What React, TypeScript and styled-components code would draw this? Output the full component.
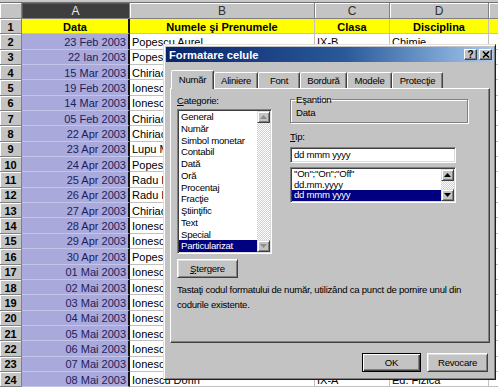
import React from "react";
import styled, { createGlobalStyle } from "styled-components";

const uiFont = `"Liberation Sans", Arial, sans-serif`;

const GlobalStyle = createGlobalStyle`
  html, body { margin: 0; padding: 0; background: #ffffff; }
  body { overflow: hidden; font-family: "Liberation Sans", Arial, sans-serif; }
  * { box-sizing: border-box; }
`;

const Screen = styled.div`
  position: relative;
  width: 498px;
  height: 389px;
  overflow: hidden;
  background: #fff;
`;

const ToolbarEdge = styled.div`
  height: 3px;
  background: #c8c8c8;
  border-bottom: 1px solid #707070;
`;

const Sheet = styled.div`
  display: grid;
  grid-template-columns: 22px 108px 185px 75px 99px 64px;
  grid-template-rows: 16px;
  grid-auto-rows: 15.35px;
  font-size: 11px;
  color: #000;
`;

const HeadCell = styled.div<{ $active?: boolean }>`
  display: flex;
  align-items: center;
  justify-content: center;
  background: ${(p) => (p.$active ? "#3e3e3e" : "#c4c4c4")};
  color: ${(p) => (p.$active ? "#e8e8e8" : "#303030")};
  border-right: 1px solid #808080;
  border-bottom: 1px solid #808080;
  box-shadow: inset 1px 1px 0 ${(p) => (p.$active ? "#5a5a5a" : "#ffffff")};
  font-size: 12px;
`;

const RowHead = styled(HeadCell)`
  font-weight: bold;
  font-size: 11px;
  color: #000;
  padding-top: 1px;
`;

type Fill = "title" | "selected" | "plain";

const Cell = styled.div<{ $fill: Fill; $align?: "left" | "center" | "right"; $edge?: boolean }>`
  display: flex;
  align-items: center;
  justify-content: ${(p) =>
    p.$align === "right" ? "flex-end" : p.$align === "center" ? "center" : "flex-start"};
  padding: 1px 2px 0 2px;
  overflow: hidden;
  white-space: nowrap;
  font-weight: ${(p) => (p.$fill === "title" ? "bold" : "normal")};
  background: ${(p) =>
    p.$fill === "title" ? "#ffff00" : p.$fill === "selected" ? "#a9a9db" : "#ffffff"};
  color: ${(p) => (p.$fill === "selected" ? "#1d1d5c" : "#000")};
  border-bottom: 1px solid ${(p) => (p.$fill === "selected" ? "#c4c4e8" : "#c0c0c0")};
  border-right: ${(p) => (p.$edge ? "2px solid #151515" : "1px solid #c0c0c0")};
`;

/* ---------- dialog ---------- */

const Dialog = styled.div`
  position: absolute;
  left: 163px;
  top: 44px;
  width: 333px;
  height: 336px;
  display: flex;
  flex-direction: column;
  padding: 2px;
  background: #c3c3c3;
  border: 1px solid;
  border-color: #e0e0e0 #202020 #202020 #e0e0e0;
  box-shadow: inset 1px 1px 0 #ffffff, inset -1px -1px 0 #808080;
  font-family: ${uiFont};
  font-size: 9.6px;
  letter-spacing: -0.25px;
  color: #000;
`;

const TitleBar = styled.div`
  height: 15px;
  display: flex;
  align-items: center;
  padding: 0 1px 0 3px;
  background: linear-gradient(to right, #0a246a 0%, #2a5a9a 55%, #a6caf0 100%);
`;

const Title = styled.span`
  font-weight: bold;
  font-size: 11.2px;
  letter-spacing: 0;
  color: #fff;
`;

const CaptionButtons = styled.div`
  margin-left: auto;
  display: flex;
  gap: 2px;
`;

const CaptionButton = styled.div`
  width: 13px;
  height: 11px;
  display: flex;
  align-items: center;
  justify-content: center;
  background: #c3c3c3;
  border: 1px solid;
  border-color: #ffffff #404040 #404040 #ffffff;
  box-shadow: inset -1px -1px 0 #808080;
  font-weight: bold;
  font-size: 10px;
  line-height: 9px;
`;

const Body = styled.div`
  flex: 1;
  display: flex;
  flex-direction: column;
  padding: 8px 3px 0 4px;
`;

const TabStrip = styled.div`
  height: 18px;
  display: flex;
  align-items: flex-end;
  padding-left: 1px;
`;

const Tab = styled.div<{ $width: number; $active?: boolean }>`
  position: relative;
  z-index: ${(p) => (p.$active ? 1 : 0)};
  width: ${(p) => p.$width}px;
  height: ${(p) => (p.$active ? 19 : 16)}px;
  margin-bottom: ${(p) => (p.$active ? -1 : 0)}px;
  display: flex;
  align-items: center;
  justify-content: center;
  padding-bottom: ${(p) => (p.$active ? 2 : 0)}px;
  background: #c3c3c3;
  border: 1px solid;
  border-bottom: none;
  border-color: #ffffff #404040 transparent #ffffff;
  border-radius: 2px 2px 0 0;
  box-shadow: inset -1px 0 0 #808080;
`;

const Panel = styled.div`
  height: 255px;
  display: flex;
  flex-direction: column;
  padding: 6px 6px 0 6px;
  border: 1px solid;
  border-color: #ffffff #404040 #404040 #ffffff;
  box-shadow: inset -1px -1px 0 #808080;
`;

const Columns = styled.div`
  display: flex;
  gap: 18px;
`;

const LeftCol = styled.div`
  width: 95px;
  display: flex;
  flex-direction: column;
`;

const RightCol = styled.div`
  width: 178px;
  display: flex;
  flex-direction: column;
`;

const FieldLabel = styled.div<{ $gap?: number }>`
  height: 12px;
  line-height: 12px;
  margin-top: ${(p) => p.$gap ?? 0}px;
`;

const Key = styled.span`
  text-decoration: underline;
`;

const SampleGroup = styled.fieldset`
  margin: -1px 0 0 0;
  height: 29px;
  padding: 2px 5px 0 5px;
  border: 1px solid #808080;
  box-shadow: 1px 1px 0 #ffffff, inset 1px 1px 0 #ffffff;
`;

const Legend = styled.legend`
  padding: 0 1px;
  margin-left: -1px;
  line-height: 11px;
`;

const SampleValue = styled.div`
  line-height: 12px;
`;

const Sunken = styled.div`
  background: #fff;
  border: 1px solid;
  border-color: #808080 #ffffff #ffffff #808080;
  box-shadow: inset 1px 1px 0 #404040, inset -1px -1px 0 #dcdcdc;
`;

const TextInput = styled(Sunken)`
  width: 166px;
  height: 16px;
  margin-top: 4px;
  padding: 0 3px;
  line-height: 14px;
`;

const ListBox = styled(Sunken)<{ $height: number; $width: number; $gap?: number }>`
  width: ${(p) => p.$width}px;
  height: ${(p) => p.$height}px;
  margin-top: ${(p) => p.$gap ?? 0}px;
  padding: 1px;
  display: flex;
  overflow: hidden;
`;

const Items = styled.div`
  flex: 1;
  display: flex;
  flex-direction: column;
  overflow: hidden;
`;

const Item = styled.div<{ $rowHeight: number; $selected?: boolean }>`
  height: ${(p) => p.$rowHeight}px;
  line-height: ${(p) => p.$rowHeight}px;
  flex-shrink: 0;
  padding: 0 2px;
  white-space: nowrap;
  background: ${(p) => (p.$selected ? "#000080" : "transparent")};
  color: ${(p) => (p.$selected ? "#ffffff" : "#000")};
`;

const ScrollBar = styled.div`
  width: 13px;
  display: flex;
  flex-direction: column;
`;

const ScrollButton = styled.div`
  height: 12px;
  display: flex;
  align-items: center;
  justify-content: center;
  background: #c3c3c3;
  border: 1px solid;
  border-color: #dfdfdf #404040 #404040 #dfdfdf;
  box-shadow: inset 1px 1px 0 #ffffff, inset -1px -1px 0 #808080;
`;

const ScrollTrack = styled.div`
  flex: 1;
  background-color: #ffffff;
  background-image: repeating-conic-gradient(#d0d0d0 0 25%, #ffffff 0 50%);
  background-size: 2px 2px;
`;

const PushButton = styled.div<{ $width: number; $default?: boolean; $gap?: number }>`
  width: ${(p) => p.$width}px;
  height: 19px;
  margin-top: ${(p) => p.$gap ?? 0}px;
  display: flex;
  align-items: center;
  justify-content: center;
  background: #c3c3c3;
  border: 1px solid;
  border-color: ${(p) => (p.$default ? "#000" : "#ffffff #404040 #404040 #ffffff")};
  box-shadow: ${(p) =>
    p.$default
      ? "inset 1px 1px 0 #ffffff, inset -1px -1px 0 #404040, inset -2px -2px 0 #808080"
      : "inset 1px 1px 0 #dfdfdf, inset -1px -1px 0 #808080"};
`;

const Hint = styled.p`
  margin: 4px 0 0 0;
  line-height: 15px;
  white-space: nowrap;
`;

const Footer = styled.div`
  margin-top: 10px;
  display: flex;
  justify-content: flex-end;
  gap: 6px;
  padding-right: 2px;
`;

/* ---------- small drawings ---------- */

const Arrow = ({ up, disabled }: { up?: boolean; disabled?: boolean }) => (
  <svg width="7" height="4" viewBox="0 0 7 4">
    <polygon
      points={up ? "0,4 3.5,0 7,4" : "0,0 3.5,4 7,0"}
      fill={disabled ? "#8c8c8c" : "#000"}
    />
  </svg>
);

const CloseGlyph = () => (
  <svg width="8" height="7" viewBox="0 0 8 7">
    <path d="M1 0.5 L7 6.5 M7 0.5 L1 6.5" stroke="#000" strokeWidth="1.6" />
  </svg>
);

/* ---------- data ---------- */

const rows: [string, string, string, string][] = [
  ["23 Feb 2003", "Popescu Aurel", "IX-B", "Chimie"],
  ["22 Ian 2003", "Popescu Aurel", "IX-B", "Fizică"],
  ["15 Mar 2003", "Chiriac Ana", "X-A", "Matematică"],
  ["19 Feb 2003", "Ionescu Dan", "IX-A", "Chimie"],
  ["14 Mar 2003", "Ionescu Dan", "IX-A", "Biologie"],
  ["05 Feb 2003", "Chiriac Ana", "X-A", "Istorie"],
  ["22 Apr 2003", "Chiriac Ana", "X-A", "Chimie"],
  ["23 Apr 2003", "Lupu Maria", "XI-C", "Fizică"],
  ["24 Apr 2003", "Popescu Aurel", "IX-B", "Geografie"],
  ["25 Apr 2003", "Radu Ioana", "XII-A", "Matematică"],
  ["26 Apr 2003", "Radu Ioana", "XII-A", "Chimie"],
  ["27 Apr 2003", "Chiriac Ana", "X-A", "Biologie"],
  ["28 Apr 2003", "Ionescu Dan", "IX-A", "Fizică"],
  ["29 Apr 2003", "Ionescu Dan", "IX-A", "Istorie"],
  ["30 Apr 2003", "Popescu Aurel", "IX-B", "Chimie"],
  ["01 Mai 2003", "Ionescu Dorin", "IX-A", "Matematică"],
  ["02 Mai 2003", "Ionescu Dorin", "IX-A", "Fizică"],
  ["03 Mai 2003", "Ionescu Dorin", "IX-A", "Chimie"],
  ["04 Mai 2003", "Ionescu Dorin", "IX-A", "Biologie"],
  ["05 Mai 2003", "Ionescu Dorin", "IX-A", "Istorie"],
  ["06 Mai 2003", "Ionescu Dorin", "IX-A", "Geografie"],
  ["07 Mai 2003", "Ionescu Dorin", "IX-A", "Chimie"],
  ["08 Mai 2003", "Ionescu Dorin", "IX-A", "Ed. Fizică"],
];

// column E is mostly off-screen, its letter falls outside the window
const columns = ["A", "B", "C", "D", ""];

const tabs: [string, number][] = [
  ["Număr", 43],
  ["Aliniere", 44],
  ["Font", 42],
  ["Bordură", 47],
  ["Modele", 45],
  ["Protecţie", 51],
];

const categories = [
  "General",
  "Număr",
  "Simbol monetar",
  "Contabil",
  "Dată",
  "Oră",
  "Procentaj",
  "Fracţie",
  "Ştiinţific",
  "Text",
  "Special",
  "Particularizat",
];

const formats = ['"On";"On";"Off"', "dd.mm.yyyy", "dd mmm yyyy"];

export default function App() {
  return (
    <Screen>
      <GlobalStyle />
      <ToolbarEdge />
      <Sheet>
        <HeadCell />
        {columns.map((c, i) => (
          <HeadCell key={i} $active={c === "A"}>
            {c}
          </HeadCell>
        ))}

        <RowHead>1</RowHead>
        <Cell $fill="title" $align="center" $edge>
          Data
        </Cell>
        <Cell $fill="title" $align="center">
          Numele şi Prenumele
        </Cell>
        <Cell $fill="title" $align="center">
          Clasa
        </Cell>
        <Cell $fill="title" $align="center">
          Disciplina
        </Cell>
        <Cell $fill="title" />

        {rows.map(([date, name, cls, subject], i) => (
          <React.Fragment key={i}>
            <RowHead>{i + 2}</RowHead>
            <Cell $fill="selected" $align="right" $edge>
              {date}
            </Cell>
            <Cell $fill="plain">{name}</Cell>
            <Cell $fill="plain">{cls}</Cell>
            <Cell $fill="plain">{subject}</Cell>
            <Cell $fill="plain" />
          </React.Fragment>
        ))}
      </Sheet>

      <Dialog>
        <TitleBar>
          <Title>Formatare celule</Title>
          <CaptionButtons>
            <CaptionButton>?</CaptionButton>
            <CaptionButton>
              <CloseGlyph />
            </CaptionButton>
          </CaptionButtons>
        </TitleBar>

        <Body>
          <TabStrip>
            {tabs.map(([label, width], i) => (
              <Tab key={label} $width={width} $active={i === 0}>
                {label}
              </Tab>
            ))}
          </TabStrip>

          <Panel>
            <Columns>
              <LeftCol>
                <FieldLabel>
                  <Key>C</Key>ategorie:
                </FieldLabel>
                <ListBox $width={95} $height={145} $gap={2}>
                  <Items>
                    {categories.map((c) => (
                      <Item key={c} $rowHeight={11.75} $selected={c === "Particularizat"}>
                        {c}
                      </Item>
                    ))}
                  </Items>
                  <ScrollBar>
                    <ScrollButton>
                      <Arrow up disabled />
                    </ScrollButton>
                    <ScrollTrack />
                    <ScrollButton>
                      <Arrow disabled />
                    </ScrollButton>
                  </ScrollBar>
                </ListBox>
              </LeftCol>

              <RightCol>
                <SampleGroup>
                  <Legend>Eşantion</Legend>
                  <SampleValue>Data</SampleValue>
                </SampleGroup>
                <FieldLabel $gap={8}>
                  <Key>T</Key>ip:
                </FieldLabel>
                <TextInput>dd mmm yyyy</TextInput>
                <ListBox $width={166} $height={36} $gap={4}>
                  <Items>
                    {formats.map((f) => (
                      <Item key={f} $rowHeight={10.67} $selected={f === "dd mmm yyyy"}>
                        {f}
                      </Item>
                    ))}
                  </Items>
                  <ScrollBar>
                    <ScrollButton>
                      <Arrow up />
                    </ScrollButton>
                    <ScrollTrack />
                    <ScrollButton>
                      <Arrow />
                    </ScrollButton>
                  </ScrollBar>
                </ListBox>
              </RightCol>
            </Columns>

            <PushButton $width={61} $gap={5}>
              <span>
                <Key>Ş</Key>tergere
              </span>
            </PushButton>
            <Hint>
              Tastaţi codul formatului de număr, utilizând ca punct de pornire unul din
              <br />
              codurile existente.
            </Hint>
          </Panel>

          <Footer>
            <PushButton $width={59} $default>
              OK
            </PushButton>
            <PushButton $width={61}>Revocare</PushButton>
          </Footer>
        </Body>
      </Dialog>
    </Screen>
  );
}
